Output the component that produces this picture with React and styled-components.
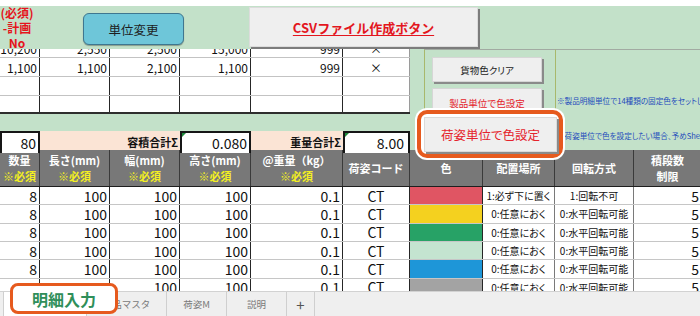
import styled, { createGlobalStyle } from "styled-components";

const GREEN = "#c3e1c9";
const GRID = "40px 70px 70px 71px 92px 67px 73px 72px 79px 68px";
const UPPER = "40px 70px 70px 71px 92px 67px";

const GlobalStyle = createGlobalStyle`
  html, body { margin: 0; padding: 0; background: #fff; }
  body { font-family: "Noto Sans CJK JP", "Noto Sans", sans-serif; }
  * { box-sizing: border-box; }
`;

const rows = [
  { color: "#e05563", place: "1:必ず下に置く", turn: "1:回転不可" },
  { color: "#f4d11f", place: "0:任意におく", turn: "0:水平回転可能" },
  { color: "#27a266", place: "0:任意におく", turn: "0:水平回転可能" },
  { color: "#c4e4d0", place: "0:任意におく", turn: "0:水平回転可能" },
  { color: "#1e96d8", place: "0:任意におく", turn: "0:水平回転可能" },
  { color: "#a3a3a3", place: "0:任意におく", turn: "0:水平回転可能" },
];

const heads = [
  { top: "数量", req: true },
  { top: "長さ(mm)", req: true },
  { top: "幅(mm)", req: true },
  { top: "高さ(mm)", req: true },
  { top: "@重量（kg）", req: true },
  { top: "荷姿コード" },
  { top: "色" },
  { top: "配置場所" },
  { top: "回転方式" },
  { top: "積段数", sub: "制限" },
];

const App = () => {
  return (
    <Page>
      <GlobalStyle />
      <Sheet>
        <TopGap />
        <Band>
          <RedLabels>
            <div>(必須)</div>
            <div>-計画</div>
            <div>No</div>
          </RedLabels>
          <UnitButton>単位変更</UnitButton>
          <CsvButton>
            <span>CSVファイル作成ボタン</span>
          </CsvButton>
        </Band>

        <Upper>
          <UpperTable>
            <TableRow $h={9}>
              <Cell $cut>10,200</Cell>
              <Cell $cut>2,550</Cell>
              <Cell $cut>2,500</Cell>
              <Cell $cut>15,000</Cell>
              <Cell $cut>999</Cell>
              <Cell $cut $align="center" $last>×</Cell>
            </TableRow>
            <TableRow $h={19}>
              <Cell>1,100</Cell>
              <Cell>1,100</Cell>
              <Cell>2,100</Cell>
              <Cell>1,100</Cell>
              <Cell>999</Cell>
              <Cell $align="center" $last>×</Cell>
            </TableRow>
            <TableRow $h={19}>
              <Cell /><Cell /><Cell /><Cell /><Cell /><Cell $last />
            </TableRow>
            <TableRow $h={18} $thick>
              <Cell /><Cell /><Cell /><Cell /><Cell /><Cell $last />
            </TableRow>
            <GreenGap />
            <SumRow>
              <SumValue>80</SumValue>
              <SumLabel>容積合計Σ</SumLabel>
              <SumValue $flag>0.080</SumValue>
              <SumLabel>重量合計Σ</SumLabel>
              <SumValue $flag $pad={4}>8.00</SumValue>
            </SumRow>
          </UpperTable>

          <SidePanel>
            <div />
            <ButtonCol>
              <SheetButton $h={25}>貨物色クリア</SheetButton>
              <SheetButton $h={30} $red>製品単位で色設定</SheetButton>
            </ButtonCol>
            <NoteCol>
              <Note>※製品明細単位で14種類の固定色をセットしています。</Note>
              <Note $gap={25}>※荷姿単位で色を設定したい場合、予めSheet「荷姿M」に色を設定</Note>
            </NoteCol>
          </SidePanel>
        </Upper>

        <HeadRow>
          {heads.map((h, i) => (
            <HeadCell key={i}>
              <span>{h.top}</span>
              {h.req && <Required>※必須</Required>}
              {h.sub && <span>{h.sub}</span>}
            </HeadCell>
          ))}
        </HeadRow>

        {rows.map((r, i) => (
          <DataRow key={i}>
            <Cell>8</Cell>
            <Cell>100</Cell>
            <Cell>100</Cell>
            <Cell>100</Cell>
            <Cell>0.1</Cell>
            <Cell $align="center">CT</Cell>
            <Cell $fill={r.color} />
            <Cell $align="center" $small $soft>{r.place}</Cell>
            <Cell $align="center" $small $soft>{r.turn}</Cell>
            <Cell $soft>5</Cell>
          </DataRow>
        ))}
      </Sheet>

      <TabBar>
        <LeadTab />
        <Tab $w={83} $active />
        <Tab $w={80}>製品マスタ</Tab>
        <Tab $w={60}>荷姿M</Tab>
        <Tab $w={60}>説明</Tab>
        <Tab $w={28} $plus>+</Tab>
      </TabBar>

      <ButtonCallout>
        <CalloutButton>荷姿単位で色設定</CalloutButton>
      </ButtonCallout>
      <TabCallout>明細入力</TabCallout>
    </Page>
  );
};

export default App;

const Page = styled.div`
  position: relative;
  width: 700px;
  height: 316px;
  overflow: hidden;
  background: #fff;
  color: #111;
`;

const Sheet = styled.div`
  height: 291px;
  overflow: hidden;
  background: #fff;
`;

const TopGap = styled.div`
  height: 6px;
  background: #fff;
`;

const Band = styled.div`
  height: 43px;
  background: ${GREEN};
  display: flex;
  align-items: flex-start;
`;

const RedLabels = styled.div`
  width: 34px;
  margin-top: -1px;
  text-align: center;
  font-size: 12px;
  font-weight: 700;
  line-height: 15px;
  color: #e5141c;
  white-space: nowrap;
`;

const UnitButton = styled.div`
  margin: 7px 0 0 49px;
  width: 101px;
  height: 32px;
  display: flex;
  align-items: center;
  justify-content: center;
  background: #6ec6d9;
  border: 1px solid #3f7790;
  border-radius: 6px;
  box-shadow: 0 1px 1px rgba(0, 0, 0, 0.3);
  font-size: 12.5px;
  color: #1d1d1d;
`;

const CsvButton = styled.div`
  margin: 1px 0 0 65px;
  width: 229px;
  height: 40px;
  display: flex;
  align-items: center;
  justify-content: center;
  background: #efefef;
  border: 1px solid #dcdcdc;
  box-shadow: 2px 2px 0 #7c7c7c;
  span {
    font-size: 13px;
    font-weight: 700;
    color: #e3161e;
    text-decoration: underline;
    text-underline-offset: 2px;
  }
`;

const Upper = styled.div`
  display: flex;
  height: 101px;
`;

const UpperTable = styled.div`
  width: 410px;
  flex: none;
  display: flex;
  flex-direction: column;
  background: ${GREEN};
`;

const TableRow = styled.div`
  display: grid;
  grid-template-columns: ${UPPER};
  height: ${({ $h }) => $h}px;
  background: #fff;
  border-bottom: ${({ $thick }) => ($thick ? "2px solid #2e2e2e" : "1px solid #c3c3c3")};
  font-size: 12px;
`;

const Cell = styled.div`
  display: flex;
  align-items: ${({ $cut }) => ($cut ? "flex-end" : "center")};
  justify-content: ${({ $align }) => ($align === "center" ? "center" : "flex-end")};
  padding: 0 2px ${({ $cut }) => ($cut ? "2px" : "0")};
  border-right: 1px solid ${({ $soft, $last }) => ($soft ? "#7a7a7a" : $last ? "#9a9a9a" : "#262626")};
  background: ${({ $fill }) => $fill || "transparent"};
  font-size: ${({ $small }) => ($small ? "10px" : "inherit")};
  font-feature-settings: "palt";
  line-height: ${({ $cut }) => ($cut ? "12px" : "normal")};
  white-space: nowrap;
  overflow: hidden;
`;

const GreenGap = styled.div`
  height: 17px;
  background: ${GREEN};
`;

const SumRow = styled.div`
  display: grid;
  grid-template-columns: 40px 140px 71px 92px 67px;
  height: 19px;
  background: #fbe4d5;
`;

const SumValue = styled.div`
  position: relative;
  display: flex;
  align-items: center;
  justify-content: flex-end;
  padding-right: ${({ $pad }) => $pad || 2}px;
  background: #fff;
  border: 2px solid #161616;
  border-bottom: none;
  font-size: 14px;
  &::before {
    content: "";
    display: ${({ $flag }) => ($flag ? "block" : "none")};
    position: absolute;
    left: 0;
    top: 0;
    border-top: 4px solid #1f8a3c;
    border-right: 4px solid transparent;
  }
`;

const SumLabel = styled.div`
  display: flex;
  align-items: center;
  justify-content: flex-end;
  padding-right: 2px;
  font-size: 11px;
  font-weight: 700;
  color: #111;
`;

const SidePanel = styled.div`
  flex: 1;
  display: grid;
  grid-template-columns: 14px 132px 1fr;
  background: ${GREEN};
`;

const ButtonCol = styled.div`
  border-top: 1px solid #a2aaa2;
  border-left: 1px solid #a8b86c;
  border-right: 1px solid #a8b86c;
  padding: 7px 0 0 7px;
  display: flex;
  flex-direction: column;
  gap: 6px;
`;

const SheetButton = styled.div`
  width: 110px;
  height: ${({ $h }) => $h}px;
  flex: none;
  display: flex;
  align-items: center;
  justify-content: center;
  background: #efefef;
  border: 1px solid #d6d6d6;
  box-shadow: 2px 2px 0 #8a8a8a;
  font-size: 9.5px;
  font-feature-settings: "palt";
  color: ${({ $red }) => ($red ? "#e5222b" : "#222")};
`;

const NoteCol = styled.div`
  border-top: 1px solid #a2aaa2;
  padding: 46px 0 0 1px;
  overflow: hidden;
`;

const Note = styled.div`
  margin-top: ${({ $gap }) => $gap || 0}px;
  font-size: 7.6px;
  line-height: 10px;
  color: #1f4cbc;
  white-space: nowrap;
  font-feature-settings: "palt";
`;

const HeadRow = styled.div`
  display: grid;
  grid-template-columns: ${GRID};
  height: 37px;
  background: #787878;
  border-bottom: 1px solid #1e1e1e;
`;

const HeadCell = styled.div`
  display: flex;
  flex-direction: column;
  align-items: center;
  justify-content: center;
  border-right: 1px solid #3a3a3a;
  font-size: 11px;
  font-weight: 700;
  line-height: 16px;
  color: #fff;
  white-space: nowrap;
  overflow: hidden;
`;

const Required = styled.span`
  color: #f2ee22;
`;

const DataRow = styled.div`
  display: grid;
  grid-template-columns: ${GRID};
  height: 18.33px;
  border-bottom: 1px solid #c6c6c6;
  font-size: 14px;
`;

const TabBar = styled.div`
  height: 25px;
  display: flex;
  background: #efefef;
  border-top: 1px solid #d2d2d2;
`;

const LeadTab = styled.div`
  width: 4px;
  border-right: 1px solid #cfcfcf;
`;

const Tab = styled.div`
  width: ${({ $w }) => $w}px;
  display: flex;
  align-items: center;
  justify-content: center;
  border-right: 1px solid #cfcfcf;
  background: ${({ $active }) => ($active ? "#fff" : "transparent")};
  font-size: ${({ $plus }) => ($plus ? "15px" : "9.5px")};
  color: ${({ $plus }) => ($plus ? "#555" : "#7a7a7a")};
`;

const ButtonCallout = styled.div`
  position: absolute;
  left: 417px;
  top: 110px;
  width: 146px;
  height: 48px;
  padding: 3px 2px 2px 3px;
  background: #fff;
  border: 4px solid #e65a1e;
  border-radius: 10px;
  box-shadow: 0 0 0 2px #fff;
`;

const CalloutButton = styled.div`
  height: 100%;
  display: flex;
  align-items: center;
  justify-content: center;
  background: #efefef;
  border: 1px solid #dadada;
  box-shadow: 2px 2px 0 #8a8a8a;
  font-size: 12.5px;
  font-feature-settings: "palt";
  color: #e5222b;
`;

const TabCallout = styled.div`
  position: absolute;
  left: 10px;
  top: 283px;
  width: 108px;
  height: 31px;
  display: flex;
  align-items: center;
  justify-content: center;
  background: #fff;
  border: 3px solid #e65a1e;
  border-radius: 8px;
  font-size: 16px;
  font-weight: 700;
  color: #2f8f5a;
`;
